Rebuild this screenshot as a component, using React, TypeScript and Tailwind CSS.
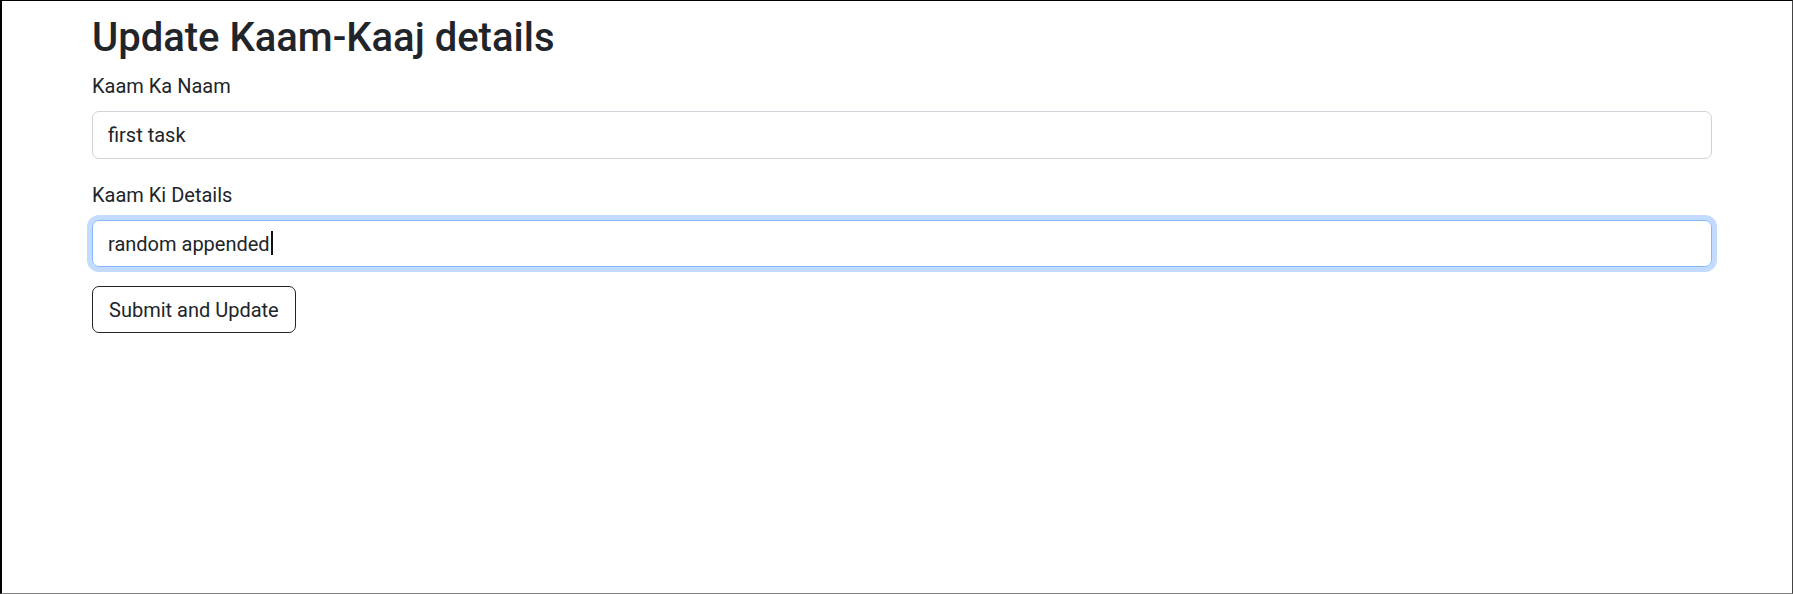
import { useState } from "react";

const App = () => {
  const [naam, setNaam] = useState("first task");
  const [details, setDetails] = useState("random appended");

  return (
    <div
      className="h-[594px] bg-white border-t border-l-2 border-black border-r border-r-[#444] border-b border-b-[#808080] text-[#212529]"
      style={{ fontFamily: '"Segoe UI", Roboto, "Noto Sans", sans-serif' }}
    >
      <div className="pl-[90px] pt-[13px] w-[1710px]">
        <h2 className="text-[40px] leading-[48px] font-medium mb-[9px]">
          Update Kaam-Kaaj details
        </h2>
        <form onSubmit={(e) => e.preventDefault()}>
          <div className="mb-[21px]">
            <label className="block text-[20px] leading-[30px] mb-[10px]">
              Kaam Ka Naam
            </label>
            <input
              type="text"
              value={naam}
              onChange={(e) => setNaam(e.target.value)}
              className="block w-[1620px] h-[48px] px-[15px] text-[20px] border border-[#ced4da] rounded-[7px] outline-none"
            />
          </div>
          <div className="mb-[19px]">
            <label className="block text-[20px] leading-[30px] mb-[10px]">
              Kaam Ki Details
            </label>
            <div className="relative w-[1620px]">
              <input
                type="text"
                value={details}
                onChange={(e) => setDetails(e.target.value)}
                className="block w-full h-[47px] px-[15px] text-[20px] border border-[#86b7fe] rounded-[7px] outline-none caret-transparent shadow-[0_0_0_5px_rgba(13,110,253,0.25)]"
              />
              {/* blinking caret frozen in the screenshot */}
              <span className="absolute left-[179px] top-[11px] w-[2px] h-[24px] bg-[#111] pointer-events-none" />
            </div>
          </div>
          <button
            type="submit"
            className="h-[47px] px-[16px] text-[20px] border border-[#212529] rounded-[7px] bg-white"
          >
            Submit and Update
          </button>
        </form>
      </div>
    </div>
  );
};

export default App;
